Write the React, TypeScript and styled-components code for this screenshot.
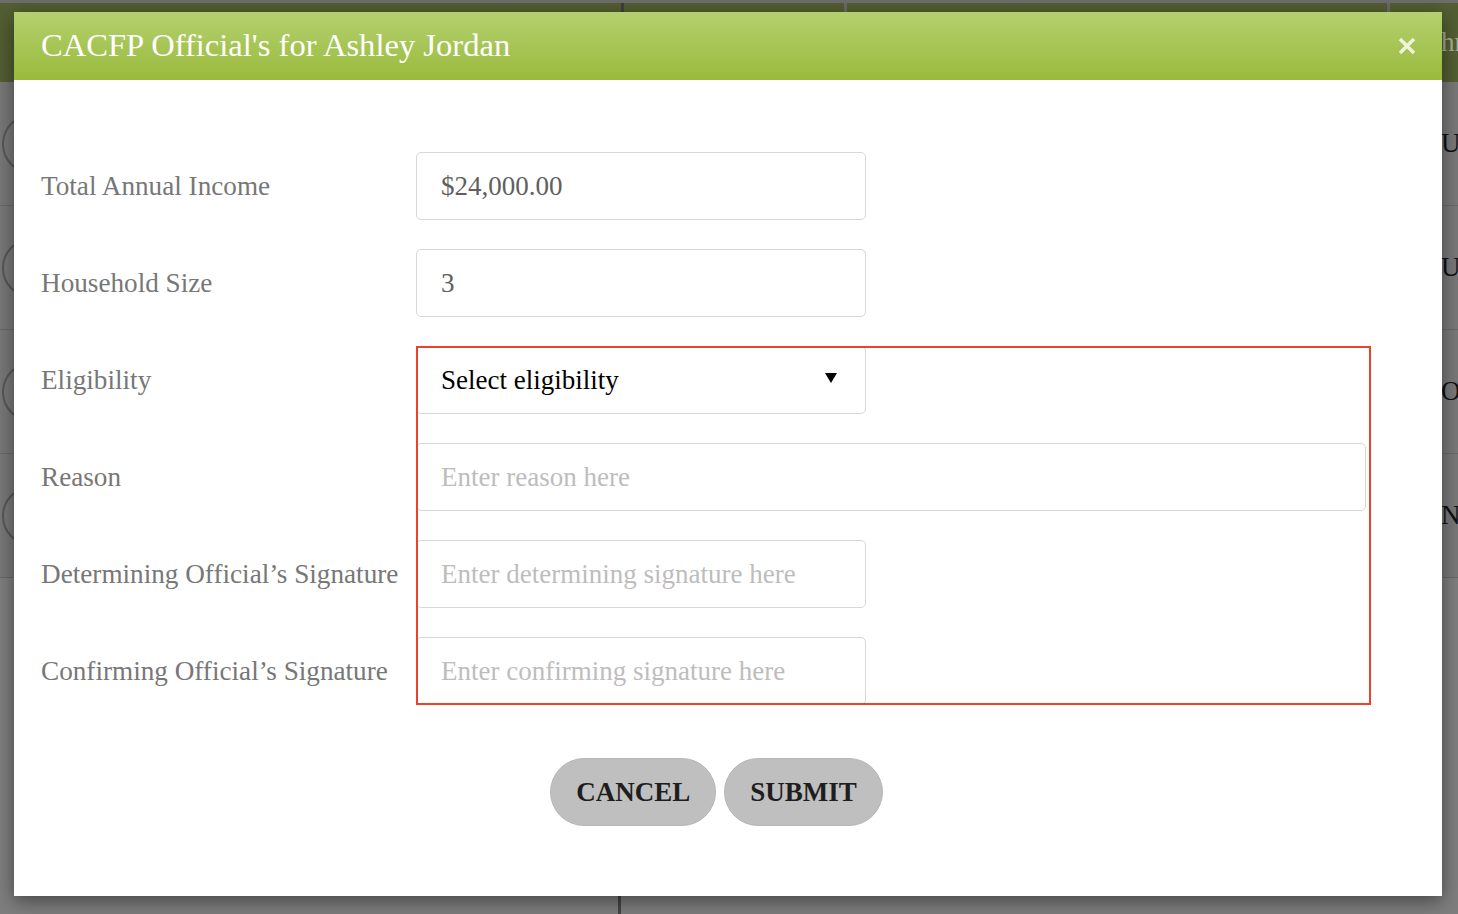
import React from "react";
import styled, { createGlobalStyle } from "styled-components";

const GlobalStyle = createGlobalStyle`
  html, body { margin: 0; padding: 0; height: 100%; overflow: hidden; }
  body { font-family: "Liberation Serif", "Times New Roman", serif; background: #7a7a7a; }
  *, *::before, *::after { box-sizing: border-box; }
`;

const SERIF = `"Liberation Serif", "Times New Roman", serif`;

/* ---------- dimmed page behind the dialog ---------- */
const Page = styled.div`
  position: relative;
  width: 1458px;
  height: 914px;
  overflow: hidden;
  display: flex;
  flex-direction: column;
  background: #7d7d7d;
`;

const TopStrip = styled.div`
  height: 3px;
  background: #6d6d6d;
`;

const HeadBar = styled.div`
  height: 79px;
  display: grid;
  grid-template-columns: 621px 223px 543px 1fr;
  background: #525e32;
`;

const HeadCell = styled.div<{ $sep?: string }>`
  border-left: ${(p) => (p.$sep ? `3px solid ${p.$sep}` : "none")};
  display: flex;
  align-items: center;
  padding-left: 27px;
  color: #a9af93;
  font-size: 27px;
  white-space: nowrap;
  overflow: hidden;
`;

const Row = styled.div`
  height: 124px;
  border-bottom: 1px solid #686868;
  display: grid;
  grid-template-columns: 1441px auto;
  align-items: center;
  background: #787878;
`;

const Avatar = styled.div`
  width: 60px;
  height: 60px;
  border-radius: 50%;
  border: 2px solid #575757;
  margin-left: 2px;
`;

const RowText = styled.span`
  font-size: 27px;
  color: #111;
  white-space: nowrap;
`;

const Lower = styled.div`
  flex: 1;
  display: grid;
  grid-template-columns: 621px 1fr;
  background: #7e7e7e;
`;

const LowerCell = styled.div`
  border-right: 3px solid #454545;
`;

/* ---------- dialog ---------- */
const Modal = styled.div`
  position: absolute;
  top: 12px;
  left: 14px;
  width: 1428px;
  height: 884px;
  background: #fff;
  box-shadow: 0 5px 18px rgba(0, 0, 0, 0.45);
  display: flex;
  flex-direction: column;
`;

const ModalHeader = styled.div`
  height: 68px;
  flex: none;
  background: linear-gradient(#b4d06f, #9aba3c);
  display: flex;
  align-items: center;
  justify-content: space-between;
  padding: 0 26px 0 27px;
`;

const Title = styled.h2`
  margin: 0 0 2px;
  font-family: ${SERIF};
  font-weight: normal;
  font-size: 32.6px;
  color: #fff;
`;

const Close = styled.button`
  border: 0;
  background: none;
  padding: 0;
  width: 18px;
  height: 18px;
  display: flex;
  cursor: pointer;
`;

const Body = styled.div`
  flex: 1;
  display: flex;
  flex-direction: column;
  padding: 72px 50px 0 27px;
`;

const Form = styled.div`
  display: grid;
  grid-template-columns: 375px 1fr;
  grid-auto-rows: 68px;
  row-gap: 29px;
`;

const Label = styled.label`
  display: flex;
  align-items: center;
  font-family: ${SERIF};
  font-size: 27.2px;
  color: #777;
  white-space: nowrap;
`;

const Input = styled.input<{ $wide?: boolean }>`
  height: 68px;
  width: ${(p) => (p.$wide ? "950px" : "450px")};
  border: 1px solid #d7d7d7;
  border-radius: 5px;
  padding: 0 24px;
  font-family: ${SERIF};
  font-size: 27px;
  color: #606060;
  background: #fff;
  outline: none;
  &::placeholder {
    color: #bdbdbd;
  }
`;

const Highlight = styled.div`
  grid-column: 2;
  grid-row: 3 / span 4;
  position: relative;
  width: 955px;
  display: grid;
  grid-template-rows: repeat(4, 68px);
  row-gap: 29px;
  &::after {
    content: "";
    position: absolute;
    inset: 0;
    border: 2px solid #e9442b;
    pointer-events: none;
  }
`;

const SelectWrap = styled.div`
  position: relative;
  width: 450px;
  height: 68px;
`;

const Select = styled.select`
  appearance: none;
  -webkit-appearance: none;
  width: 100%;
  height: 100%;
  border: 1px solid #d7d7d7;
  border-radius: 5px;
  padding: 0 24px;
  font-family: ${SERIF};
  font-size: 27px;
  color: #000;
  background: #fff;
  outline: none;
`;

const Caret = styled.svg`
  position: absolute;
  right: 29px;
  top: 27px;
  pointer-events: none;
`;

const Actions = styled.div`
  display: flex;
  justify-content: center;
  gap: 8px;
  margin-top: 53px;
`;

const Pill = styled.button`
  height: 68px;
  padding: 0 25px;
  border-radius: 34px;
  background: #bfbfbf;
  border: 1px solid #b7b7b7;
  font-family: ${SERIF};
  font-weight: bold;
  font-size: 27px;
  color: #1e1e1e;
  cursor: pointer;
`;

const rows = ["UNKNOWN", "UNKNOWN", "OTHER", "NO"];

export default function App() {
  return (
    <>
      <GlobalStyle />
      <Page>
        <TopStrip />
        <HeadBar>
          <HeadCell />
          <HeadCell $sep="#3f3f3f" />
          <HeadCell $sep="#6a6a6a" />
          <HeadCell $sep="#6a6a6a">Ethnicity</HeadCell>
        </HeadBar>
        {rows.map((r, i) => (
          <Row key={i}>
            <Avatar />
            <RowText>{r}</RowText>
          </Row>
        ))}
        <Lower>
          <LowerCell />
          <div />
        </Lower>

        <Modal role="dialog" aria-labelledby="dlg-title">
          <ModalHeader>
            <Title id="dlg-title">CACFP Official's for Ashley Jordan</Title>
            <Close aria-label="Close">
              <svg width="18" height="18" viewBox="0 0 18 18">
                <path
                  d="M2 2 L16 16 M16 2 L2 16"
                  stroke="#eef3dc"
                  strokeWidth="3.4"
                  strokeLinecap="butt"
                />
              </svg>
            </Close>
          </ModalHeader>
          <Body>
            <Form>
              <Label>Total Annual Income</Label>
              <Input defaultValue="$24,000.00" />
              <Label>Household Size</Label>
              <Input defaultValue="3" />
              <Label>Eligibility</Label>
              <Highlight>
                <SelectWrap>
                  <Select defaultValue="">
                    <option value="">Select eligibility</option>
                  </Select>
                  <Caret width="12" height="10" viewBox="0 0 12 10">
                    <path d="M0 0 H12 L6 10 Z" fill="#000" />
                  </Caret>
                </SelectWrap>
                <Input $wide placeholder="Enter reason here" />
                <Input placeholder="Enter determining signature here" />
                <Input placeholder="Enter confirming signature here" />
              </Highlight>
              <Label>Reason</Label>
              <Label>Determining Official’s Signature</Label>
              <Label>Confirming Official’s Signature</Label>
            </Form>
            <Actions>
              <Pill>CANCEL</Pill>
              <Pill>SUBMIT</Pill>
            </Actions>
          </Body>
        </Modal>
      </Page>
    </>
  );
}
